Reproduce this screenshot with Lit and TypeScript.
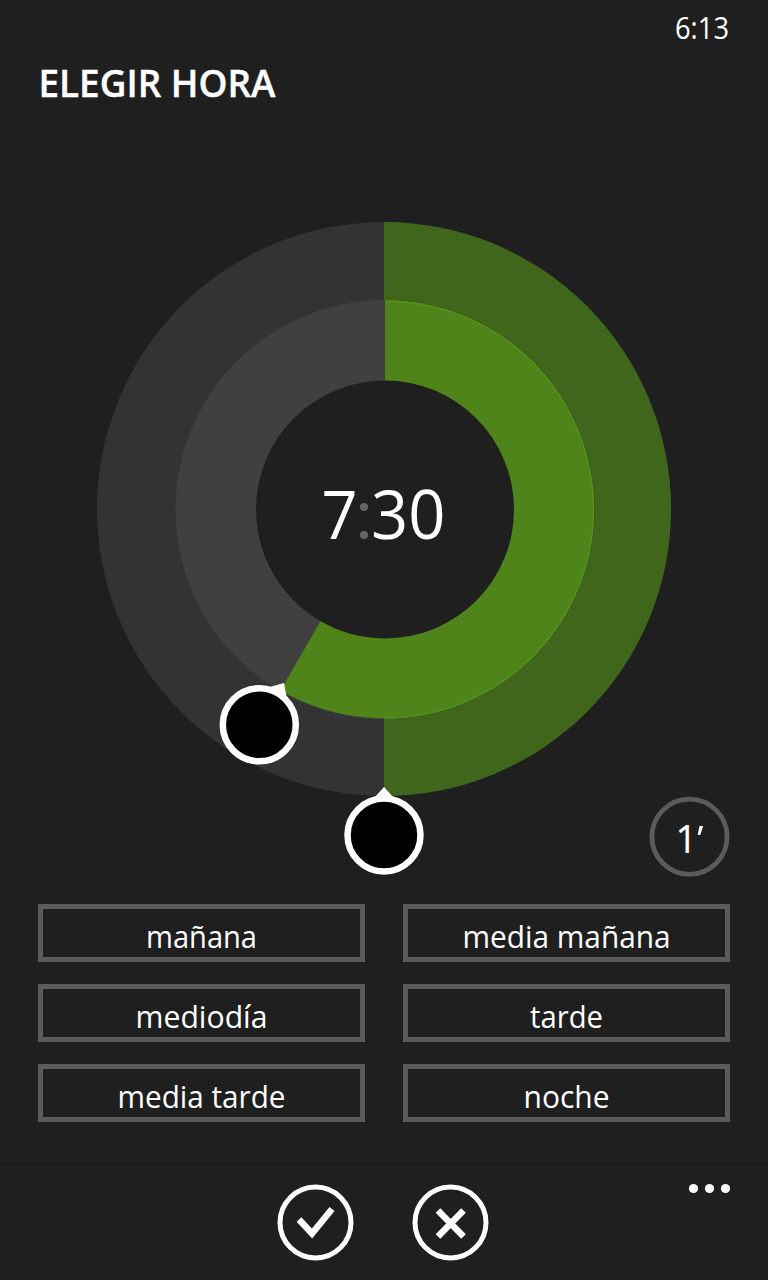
import { LitElement, html, svg, css } from 'lit';
import { customElement } from 'lit/decorators.js';

@customElement('app-root')
class AppRoot extends LitElement {
  static styles = css`
    :host { display: flex; flex-direction: column; width: 768px; height: 1280px; background: #1f1f1f; overflow: hidden; }
    svg { display: block; font-family: "Open Sans", "Noto Sans", sans-serif; fill: #fff; }
    .top { flex: 0 0 120px; }
    .dial { flex: 0 0 784px; }
    .grid { display: grid; grid-template-columns: 327px 327px; gap: 22px 38px; padding: 0 38px; }
    .choice { height: 58px; box-sizing: border-box; border: 5px solid #5b5b5b; background: none; padding: 0; display: flex; }
    .bar { margin-top: auto; height: 116px; }
  `;

  private presets = [
    ['mañana', 111], ['media mañana', 208],
    ['mediodía', 132], ['tarde', 73],
    ['media tarde', 168], ['noche', 86],
  ] as [string, number][];

  render() {
    return html`
      <svg class="top" width="768" height="120" viewBox="0 0 768 120">
        <text x="675" y="38.500" font-size="31.500" textLength="54" lengthAdjust="spacingAndGlyphs">6:13</text>
        <text x="38.500" y="97" font-size="37.500" font-weight="600" stroke="#fff" stroke-width=".4" textLength="237" lengthAdjust="spacingAndGlyphs">ELEGIR HORA</text>
      </svg>
      <svg class="dial" width="768" height="784" viewBox="0 120 768 784">
        <circle cx="384" cy="509" r="287" fill="#333"/>
        <path d="M384 222a287 287 0 0 1 0 574z" fill="#3f661b"/>
        <circle cx="385" cy="509.500" r="209.500" fill="#404040"/>
        <path d="M385 300.500A209 209 0 1 1 280.500 690.500L385 509.500z" fill="#4f841a"/>
        <path d="M385 301a208.500 208.500 0 0 1 0 417" fill="none" stroke="#529616" stroke-width="1.300"/>
        <circle cx="385" cy="509.500" r="129" fill="#1f1f1f"/>
        <text x="321.500" y="538.500" font-size="68" textLength="36" lengthAdjust="spacingAndGlyphs">7</text>
        <circle cx="364" cy="507" r="4" fill="#666"/><circle cx="364" cy="535" r="4" fill="#666"/>
        <text x="371" y="538.500" font-size="67.500" textLength="74.500" lengthAdjust="spacingAndGlyphs">30</text>
        <path d="M268 687.500l16-4.500 3 16z"/><circle cx="259.300" cy="724.800" r="36.500" fill="#000" stroke="#fff" stroke-width="6.500"/>
        <path d="M374 798l10-11 10 11z"/><circle cx="384" cy="835" r="36.500" fill="#000" stroke="#fff" stroke-width="6.500"/>
        <circle cx="689.500" cy="836.700" r="37.600" fill="none" stroke="#5b5b5b" stroke-width="4.800"/>
        <text x="675.500" y="853" font-size="37.500" stroke="#fff" stroke-width=".2">1</text><path d="M699.500 826h3.700l-3 9h-2.500z"/>
      </svg>
      <div class="grid">${this.presets.map(([t, w]) => html`<button class="choice"><svg width="317" height="48"><text x=${(317 - w) / 2} y="38.500" font-size="31.500" textLength=${w} lengthAdjust="spacingAndGlyphs">${t}</text></svg></button>`)}</div>
      <svg class="bar" width="768" height="116" viewBox="0 1164 768 116">
        <rect y="1164" width="768" height="1" fill="#151515"/>
        <g fill="none" stroke="#fff"><circle cx="315.500" cy="1222.500" r="35.500" stroke-width="5"/><circle cx="450.500" cy="1222.500" r="35.500" stroke-width="5"/>
        <path d="M299 1219.500l13 14 20-24.500" stroke-width="6.500"/><path d="M438 1210.500l25.500 26m0-26l-25.500 26" stroke-width="6.500"/></g>
        ${[693.5, 709.5, 725.5].map((x) => svg`<circle cx=${x} cy="1188.500" r="4.600"/>`)}
      </svg>`;
  }
}
